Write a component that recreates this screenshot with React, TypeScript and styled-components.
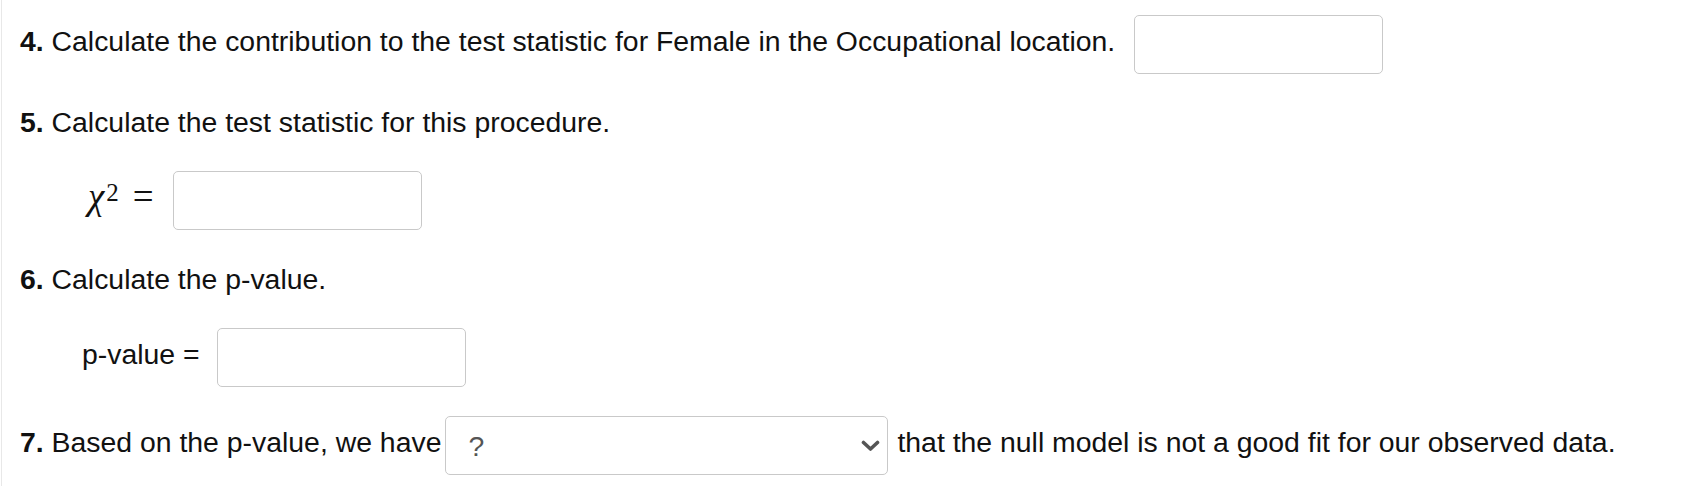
import React from 'react'
import styled, { createGlobalStyle } from 'styled-components'

const GlobalStyle = createGlobalStyle`
  html, body {
    margin: 0;
    padding: 0;
    background: #fff;
  }
  body {
    font-family: "Liberation Sans", Arial, Helvetica, sans-serif;
    color: #111;
  }
`

const Page = styled.div`
  margin-left: 1px;
  border-left: 1px solid #e8e8e8;
  padding: 15px 0 13px 18px;
  font-size: 28.4px;
  line-height: 34px;
`

const Row = styled.div<{ $top: number; $indent?: number }>`
  display: flex;
  align-items: center;
  margin-top: ${(p) => p.$top}px;
  padding-left: ${(p) => p.$indent || 0}px;
  white-space: nowrap;
`

const Heading = styled.div<{ $top: number }>`
  margin-top: ${(p) => p.$top}px;
  white-space: nowrap;
`

const Num = styled.b`
  font-weight: bold;
`

// text in the answer rows sits a little above the box centre
const Label = styled.span<{ $gap?: number }>`
  margin-right: ${(p) => p.$gap || 0}px;
  margin-bottom: 8px;
`

const Answer = styled.div`
  box-sizing: border-box;
  width: 249px;
  height: 59px;
  border: 1px solid #c9c9c9;
  border-radius: 5px;
  background: #fff;
  flex: none;
`

const Chi = styled.span`
  display: inline-flex;
  align-items: baseline;
  font-family: "Liberation Serif", "Times New Roman", serif;
  font-size: 37px;
  margin-right: 19px;
  margin-bottom: 8px;
`

const ChiLetter = styled.i`
  font-style: italic;
`

const Sup = styled.sup`
  font-size: 25px;
  line-height: 0;
  position: relative;
  top: -8px;
  margin-left: 2px;
  vertical-align: super;
`

const Equals = styled.span`
  margin-left: 14px;
`

const Select = styled.div`
  box-sizing: border-box;
  width: 443px;
  height: 59px;
  border: 1px solid #c9c9c9;
  border-radius: 5px;
  display: flex;
  align-items: center;
  justify-content: space-between;
  padding: 0 7px 0 22px;
  margin: 0 9px 0 4px;
  color: #555;
  flex: none;
`

function Chevron() {
  return (
    <svg width="19" height="12" viewBox="0 0 19 12">
      <path d="M2.5 2.5 L9.5 9 L16.5 2.5" fill="none" stroke="#555" strokeWidth="3.6" strokeLinecap="round" strokeLinejoin="round" />
    </svg>
  )
}

export default function App() {
  return (
    <>
      <GlobalStyle />
      <Page>
        <Row $top={0}>
          <Label $gap={19}>
            <Num>4.</Num> Calculate the contribution to the test statistic for Female in the Occupational location.
          </Label>
          <Answer />
        </Row>

        <Heading $top={31}>
          <Num>5.</Num> Calculate the test statistic for this procedure.
        </Heading>

        <Row $top={32} $indent={68}>
          <Chi>
            <ChiLetter>χ</ChiLetter>
            <Sup>2</Sup>
            <Equals>=</Equals>
          </Chi>
          <Answer />
        </Row>

        <Heading $top={32}>
          <Num>6.</Num> Calculate the p-value.
        </Heading>

        <Row $top={32} $indent={62}>
          <Label $gap={17}>p-value =</Label>
          <Answer />
        </Row>

        <Row $top={29}>
          <Label>
            <Num>7.</Num> Based on the p-value, we have
          </Label>
          <Select>
            <span>?</span>
            <Chevron />
          </Select>
          <Label>that the null model is not a good fit for our observed data.</Label>
        </Row>
      </Page>
    </>
  )
}
